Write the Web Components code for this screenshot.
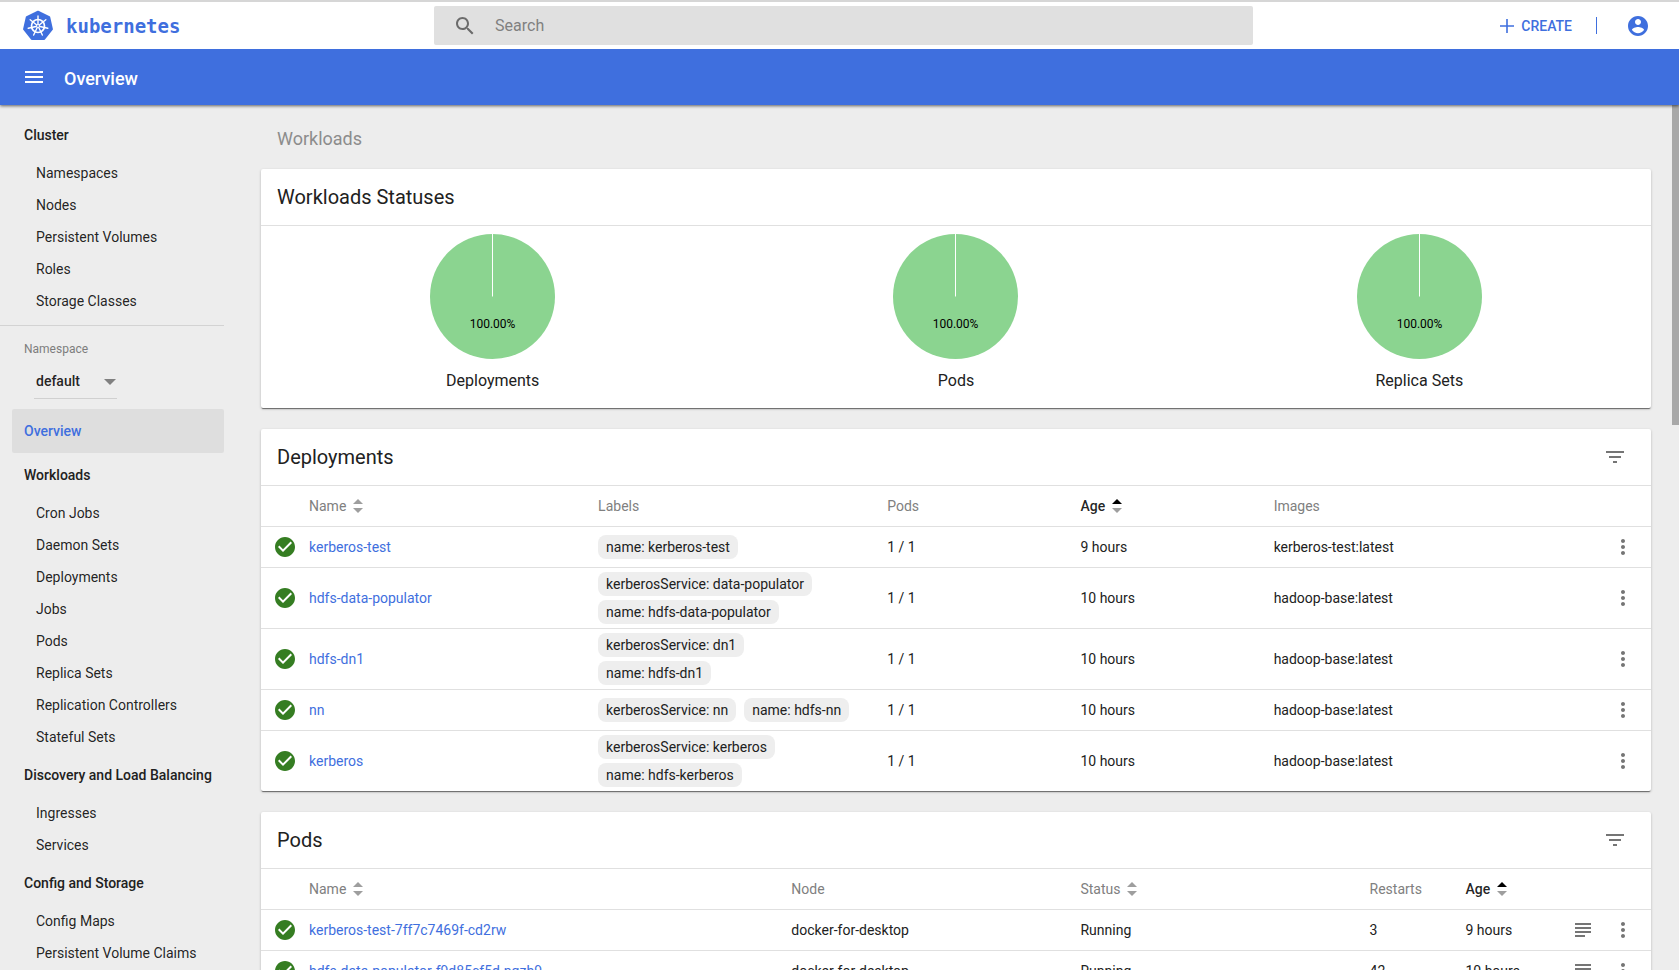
<!DOCTYPE html>
<html lang="en">
<head>
<meta charset="utf-8">
<meta name="viewport" content="width=device-width, initial-scale=1">
<title>Overview - Kubernetes Dashboard</title>
<style>
  :root {
    --primary: #3f6fde;
    --ink: rgba(0, 0, 0, .87);
    --muted: rgba(0, 0, 0, .54);
    --line: #e0e0e0;
    --page: #ededed;
  }
  html, body { margin: 0; height: 100%; }
  body {
    font: 14px/20px Roboto, "Liberation Sans", sans-serif;
    color: #212121;
    background: var(--page);
    overflow: hidden;
  }
</style>
</head>
<body>
<kd-app>
  <kd-top-bar slot="top"></kd-top-bar>
  <kd-action-bar slot="top">Overview</kd-action-bar>

  <kd-nav slot="nav">
    <kd-nav-group heading="Cluster">
      <a href="#namespaces">Namespaces</a>
      <a href="#nodes">Nodes</a>
      <a href="#pv">Persistent Volumes</a>
      <a href="#roles">Roles</a>
      <a href="#storage">Storage Classes</a>
    </kd-nav-group>
    <kd-namespace></kd-namespace>
    <kd-nav-current>Overview</kd-nav-current>
    <kd-nav-group heading="Workloads">
      <a href="#cron">Cron Jobs</a>
      <a href="#daemon">Daemon Sets</a>
      <a href="#deployments">Deployments</a>
      <a href="#jobs">Jobs</a>
      <a href="#pods">Pods</a>
      <a href="#rs">Replica Sets</a>
      <a href="#rc">Replication Controllers</a>
      <a href="#stateful">Stateful Sets</a>
    </kd-nav-group>
    <kd-nav-group heading="Discovery and Load Balancing">
      <a href="#ingresses">Ingresses</a>
      <a href="#services">Services</a>
    </kd-nav-group>
    <kd-nav-group heading="Config and Storage">
      <a href="#config">Config Maps</a>
      <a href="#pvc">Persistent Volume Claims</a>
    </kd-nav-group>
  </kd-nav>

  <kd-card heading="Workloads Statuses">
    <kd-pies>
      <kd-pie value="100.00%">Deployments</kd-pie>
      <kd-pie value="100.00%">Pods</kd-pie>
      <kd-pie value="100.00%">Replica Sets</kd-pie>
    </kd-pies>
  </kd-card>
  <kd-card heading="Deployments" filter>
    <kd-table source="deployments"></kd-table>
  </kd-card>
  <kd-card heading="Pods" filter>
    <kd-table source="pods"></kd-table>
  </kd-card>
</kd-app>

<script>
const ICONS = {
  menu: '<path d="M3 18h18v-2H3v2zm0-5h18v-2H3v2zm0-7v2h18V6H3z"/>',
  search: '<path d="M15.5 14h-.79l-.28-.27C15.41 12.59 16 11.11 16 9.5 16 5.91 13.09 3 9.5 3S3 5.91 3 9.5 5.91 16 9.5 16c1.61 0 3.09-.59 4.23-1.57l.27.28v.79l5 4.99L20.49 19l-4.99-5zm-6 0C7.01 14 5 11.99 5 9.5S7.01 5 9.5 5 14 7.01 14 9.5 11.99 14 9.5 14z"/>',
  plus: '<path d="M19 12.8h-6.200V19h-1.600v-6.200H5v-1.600h6.200V5h1.600v6.200H19z"/>',
  account: '<path d="M12 2C6.480 2 2 6.480 2 12s4.480 10 10 10 10-4.480 10-10S17.520 2 12 2zm0 3c1.660 0 3 1.340 3 3s-1.340 3-3 3-3-1.340-3-3 1.340-3 3-3zm0 14.200c-2.500 0-4.710-1.280-6-3.220.03-1.990 4-3.080 6-3.080 1.990 0 5.970 1.090 6 3.080-1.290 1.940-3.500 3.220-6 3.220z"/>',
  filter: '<path d="M10 18h4v-2h-4v2zM3 6v2h18V6H3zm3 7h12v-2H6v2z"/>',
  more: '<path d="M12 8c1.100 0 2-.9 2-2s-.9-2-2-2-2 .9-2 2 .9 2 2 2zm0 2c-1.100 0-2 .9-2 2s.9 2 2 2 2-.9 2-2-.9-2-2-2zm0 6c-1.100 0-2 .9-2 2s.9 2 2 2 2-.9 2-2-.9-2-2-2z"/>',
  logs: '<path d="M14 17H4v2h10v-2zm6-8H4v2h16V9zM4 15h16v-2H4v2zM4 5v2h16V5H4z"/>',
  check: '<path d="M12 2C6.480 2 2 6.480 2 12s4.480 10 10 10 10-4.480 10-10S17.520 2 12 2zm-2 15l-5-5 1.410-1.410L10 14.170l7.590-7.590L19 8l-9 9z"/>',
  sort: '<path d="M7 10l5-5 5 5z"/><path d="M7 14l5 5 5-5z"/>',
  sorted: '<path fill="#000" d="M7 10l5-5 5 5z"/><path fill="#9e9e9e" d="M7 14l5 5 5-5z"/>'
};

function define(name, html, setup) {
  const template = document.createElement('template');
  template.innerHTML = html;
  customElements.define(name, class extends HTMLElement {
    constructor() {
      super();
      this.attachShadow({ mode: 'open' }).append(template.content.cloneNode(true));
    }
    connectedCallback() {
      if (setup && !this.ready) { this.ready = true; setup(this, this.shadowRoot); }
    }
  });
}

define('kd-icon', `
  <style>
    :host { display: block; width: 24px; height: 24px; flex: none; }
    svg { display: block; width: 100%; height: 100%; fill: currentColor; }
  </style>
  <svg viewBox="0 0 24 24" aria-hidden="true"></svg>`,
  (el, root) => { root.querySelector('svg').innerHTML = ICONS[el.getAttribute('name')]; });

define('kd-logo', `
  <style>
    :host { display: block; width: 30px; height: 32px; flex: none; }
    svg { display: block; width: 100%; height: 100%; }
  </style>
  <svg viewBox="-15 -16 30 32" aria-hidden="true">
    <path class="body" fill="#3f6fde" stroke="#3f6fde" stroke-width="2" stroke-linejoin="round"></path>
    <g fill="none" stroke="#fff" stroke-linecap="round">
      <circle r="6.500" stroke-width="1.700"/>
      <g class="spokes" stroke-width="1.400"></g>
    </g>
    <circle r="2" fill="#fff"/><circle r=".9" fill="#3f6fde"/>
  </svg>`,
  (el, root) => {
    const at = (r, i) => {
      const a = i * 2 * Math.PI / 7 - Math.PI / 2;
      return (r * Math.cos(a)).toFixed(2) + ' ' + (r * Math.sin(a)).toFixed(2);
    };
    const seven = [0, 1, 2, 3, 4, 5, 6];
    root.querySelector('.body').setAttribute('d', 'M' + seven.map(i => at(14.3, i)).join('L') + 'Z');
    root.querySelector('.spokes').innerHTML =
      seven.map(i => `<path d="M${at(2, i)}L${at(10, i)}"/>`).join('');
  });

define('kd-app', `
  <style>
    :host { display: flex; flex-direction: column; height: 100vh; }
    header { position: relative; z-index: 1; box-shadow: 0 1px 3px rgba(0, 0, 0, .6); }
    .body { flex: 1; min-height: 0; display: flex; position: relative; }
    nav, main { overflow: auto; scrollbar-width: none; box-sizing: border-box; }
    nav { flex: 0 0 224px; }
    main { flex: 1; min-width: 0; padding: 0 28px 20px 37px; }
    h1 { margin: 0; padding: 22px 16px 18px; font-size: 18px; line-height: 24px; font-weight: 400; color: #8c8c8c; }
    .cards { display: flex; flex-direction: column; gap: 21px; }
    .thumb { position: absolute; top: 0; right: 0; width: 7px; height: 37%; background: #a8a8a8; }
  </style>
  <header><slot name="top"></slot></header>
  <div class="body">
    <nav><slot name="nav"></slot></nav>
    <main><h1>Workloads</h1><div class="cards"><slot></slot></div></main>
    <div class="thumb"></div>
  </div>`);

define('kd-top-bar', `
  <style>
    :host {
      display: grid; grid-template-columns: minmax(0, 1fr) 49% minmax(0, 1fr); align-items: center;
      box-sizing: border-box; height: 49px; padding-left: 8px;
      border-top: 2px solid #d6d6d6; background: #fff; color: var(--primary);
    }
    .brand { display: flex; align-items: center; gap: 13px; padding-left: 15px; text-decoration: none;
      color: inherit; font: 700 19px/24px "DejaVu Sans Mono", monospace; }
    label { display: flex; align-items: center; gap: 18px; height: 39px; padding-left: 19px;
      border-radius: 2px; background: #e0e0e0; color: #6b6b6b; }
    input { flex: 1; border: 0; padding: 0; background: none; outline: 0; color: var(--ink); font: 16px/24px Roboto, sans-serif; }
    input::placeholder { color: #808080; opacity: 1; }
    .actions { display: flex; align-items: center; justify-content: flex-end; gap: 24px; padding-right: 29px; }
    button { display: flex; align-items: center; gap: 2px; border: 0; padding: 0; background: none; color: inherit;
      font: 500 14px/20px Roboto, sans-serif; }
    .rule { width: 1px; height: 17px; background: currentColor; }
    .account { padding-left: 5px; }
  </style>
  <a class="brand" href="#"><kd-logo></kd-logo>kubernetes</a>
  <label><kd-icon name="search"></kd-icon><input type="text" placeholder="Search" aria-label="Search"></label>
  <div class="actions">
    <button><kd-icon name="plus"></kd-icon>CREATE</button>
    <div class="rule"></div>
    <button class="account" aria-label="Account"><kd-icon name="account"></kd-icon></button>
  </div>`);

define('kd-action-bar', `
  <style>
    :host { display: flex; align-items: center; gap: 18px; height: 56px; padding-left: 22px;
      background: var(--primary); color: #fff; }
    button { border: 0; padding: 0; background: none; color: inherit; }
    h2 { margin: 0; padding-top: 4px; font-size: 18px; line-height: 24px; font-weight: 500; }
  </style>
  <button aria-label="Menu"><kd-icon name="menu"></kd-icon></button>
  <h2><slot></slot></h2>`);

define('kd-nav', `
  <style>:host { display: block; padding-top: 8px; }</style><slot></slot>`);

define('kd-nav-group', `
  <style>
    :host { display: block; }
    h3 { margin: 0; padding: 12px 0 12px 24px; font-size: 14px; line-height: 20px; font-weight: 500; white-space: nowrap; }
    ::slotted(a) { display: block; padding: 6px 0 6px 36px; line-height: 20px; color: var(--ink); text-decoration: none; white-space: nowrap; }
  </style>
  <h3></h3><slot></slot>`,
  (el, root) => { root.querySelector('h3').textContent = el.getAttribute('heading'); });

define('kd-namespace', `
  <style>
    :host { display: block; margin-top: 8px; padding: 15px 0 10px; border-top: 1px solid #d3d3d3; }
    label { display: block; padding-left: 24px; font-size: 12px; line-height: 16px; color: #7d7d7d; }
    .field { display: grid; align-items: center; width: 83px; margin: 8px 0 0 34px; border-bottom: 1px solid #d0d0d0; }
    select, i { grid-area: 1 / 1; }
    select { appearance: none; width: 100%; height: 33px; border: 0; padding: 0 0 2px 2px; background: none;
      color: var(--ink); font: 500 14px/20px Roboto, sans-serif; }
    i { justify-self: end; margin-right: 1px; border: 6px solid transparent; border-top-color: #808080; border-bottom: 0; pointer-events: none; }
  </style>
  <label for="ns">Namespace</label>
  <div class="field"><select id="ns"><option>default</option></select><i></i></div>`);

define('kd-nav-current', `
  <style>
    :host { display: block; padding-left: 12px; }
    a { display: block; padding: 12px; border-radius: 2px; background: #dedede; color: var(--primary);
      line-height: 20px; font-weight: 500; text-decoration: none; }
  </style>
  <a href="#overview"><slot></slot></a>`);

define('kd-card', `
  <style>
    :host { display: block; border-radius: 2px; background: #fff;
      box-shadow: 0 1px 3px rgba(0, 0, 0, .2), 0 1px 1px rgba(0, 0, 0, .14), 0 2px 1px -1px rgba(0, 0, 0, .4); }
    header { display: flex; align-items: center; justify-content: space-between; height: 56px; padding: 0 24px 0 16px; border-bottom: 1px solid var(--line); }
    h2 { margin: 0; font-size: 20px; line-height: 28px; font-weight: 400; }
    button { border: 0; padding: 0; background: none; color: #757575; }
    :host(:not([filter])) button { display: none; }
  </style>
  <header><h2></h2><button aria-label="Filter"><kd-icon name="filter"></kd-icon></button></header>
  <slot></slot>`,
  (el, root) => { root.querySelector('h2').textContent = el.getAttribute('heading'); });

define('kd-pies', `
  <style>:host { display: grid; grid-template-columns: repeat(3, 1fr); padding: 8px 0 15px; }</style><slot></slot>`);

define('kd-pie', `
  <style>
    :host { display: flex; flex-direction: column; align-items: center; gap: 10px; font-size: 16px; line-height: 24px; }
    svg { display: block; width: 125px; height: 125px; }
    text { font-size: 12px; text-anchor: middle; fill: #000; }
  </style>
  <svg viewBox="0 0 125 125">
    <circle cx="62.500" cy="62.500" r="62.500" fill="#8bd490"/>
    <path d="M62.500 0V62.500" stroke="#fff"/>
    <text x="62.500" y="94"></text>
  </svg>
  <slot></slot>`,
  (el, root) => { root.querySelector('text').textContent = el.getAttribute('value'); });

define('kd-chip', `
  <style>:host { display: block; padding: 2px 8px; border-radius: 8px; background: #eee; line-height: 20px; white-space: nowrap; }</style><slot></slot>`);

const chips = (...list) => `<div class="chips">${list.map(c => `<kd-chip>${c}</kd-chip>`).join('')}</div>`;
const TABLES = {
  deployments: {
    columns: [['Name', '20.8%', 'sort'], ['Labels', '20.8%'], ['Pods', '13.9%'], ['Age', '13.9%', 'sorted'], ['Images', 'auto']],
    rows: [
      ['kerberos-test', chips('name: kerberos-test'), '1 / 1', '9 hours', 'kerberos-test:latest'],
      ['hdfs-data-populator', chips('kerberosService: data-populator', 'name: hdfs-data-populator'), '1 / 1', '10 hours', 'hadoop-base:latest'],
      ['hdfs-dn1', chips('kerberosService: dn1', 'name: hdfs-dn1'), '1 / 1', '10 hours', 'hadoop-base:latest'],
      ['nn', chips('kerberosService: nn', 'name: hdfs-nn'), '1 / 1', '10 hours', 'hadoop-base:latest'],
      ['kerberos', chips('kerberosService: kerberos', 'name: hdfs-kerberos'), '1 / 1', '10 hours', 'hadoop-base:latest']
    ]
  },
  pods: {
    logs: true,
    columns: [['Name', '34.7%', 'sort'], ['Node', '20.8%'], ['Status', '20.8%', 'sort'], ['Restarts', '6.9%'], ['Age', 'auto', 'sorted']],
    rows: [
      ['kerberos-test-7ff7c7469f-cd2rw', 'docker-for-desktop', 'Running', '3', '9 hours'],
      ['hdfs-data-populator-f9d85cf5d-nqzh9', 'docker-for-desktop', 'Running', '42', '10 hours']
    ]
  }
};

define('kd-table', `
  <style>
    :host { display: block; }
    table { width: 100%; table-layout: fixed; border-collapse: separate; border-spacing: 0; }
    th, td { height: 40px; padding: 0; text-align: left; font-weight: 400; white-space: nowrap; }
    tbody td { border-top: 1px solid var(--line); }
    th { color: #808080; }
    th.sorted { color: var(--ink); font-weight: 500; }
    th div { display: flex; align-items: center; }
    th kd-icon { color: #9e9e9e; width: 24px; height: 24px; }
    a { color: var(--primary); text-decoration: none; }
    .lead { width: 48px; }
    .lead kd-icon { margin-left: 12px; color: #357d22; }
    .tail { width: 88px; }
    .tail div { display: flex; justify-content: flex-end; gap: 16px; padding-right: 16px; }
    button { border: 0; padding: 0; background: none; color: #757575; }
    .chips { display: flex; flex-wrap: wrap; gap: 4px 8px; padding: 4px 28px 4px 0; }
  </style>
  <table><thead></thead><tbody></tbody></table>`,
  (el, root) => {
    const data = TABLES[el.getAttribute('source')];
    root.querySelector('thead').innerHTML = '<tr><th class="lead"></th>' + data.columns.map(([name, width, sort]) =>
      `<th class="${sort || ''}" style="width:${width}"><div>${name}${sort ? `<kd-icon name="${sort}"></kd-icon>` : ''}</div></th>`
    ).join('') + '<th class="tail"></th></tr>';
    root.querySelector('tbody').innerHTML = data.rows.map(row =>
      '<tr><td class="lead"><kd-icon name="check"></kd-icon></td>' +
      row.map((cell, i) => `<td>${i ? cell : `<a href="#${cell}">${cell}</a>`}</td>`).join('') +
      '<td class="tail"><div>' +
      (data.logs ? '<button aria-label="Logs"><kd-icon name="logs"></kd-icon></button>' : '') +
      '<button aria-label="More actions"><kd-icon name="more"></kd-icon></button></div></td></tr>'
    ).join('');
  });
</script>
</body>
</html>
